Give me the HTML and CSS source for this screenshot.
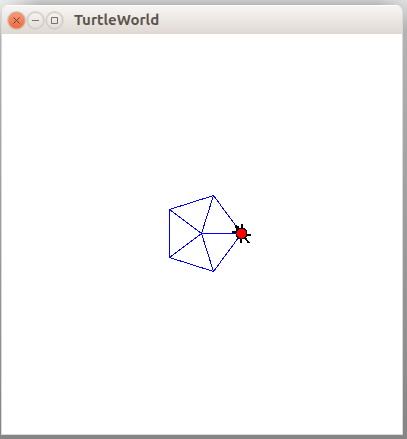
FILE: index.html
```html
<!DOCTYPE html>
<html lang="en">
<head>
<meta charset="utf-8">
<title>TurtleWorld</title>
<link rel="stylesheet" href="styles.css">
</head>
<body>
<main class="window">
  <header class="titlebar">
    <div class="controls">
      <button class="control control-close" type="button" aria-label="Close">
        <svg viewBox="0 0 15 15"><path d="M4.500 4.500l6 6M10.500 4.500l-6 6"/></svg>
      </button>
      <button class="control" type="button" aria-label="Minimize">
        <svg viewBox="0 0 15 15"><path d="M4 7.5h7"/></svg>
      </button>
      <button class="control" type="button" aria-label="Maximize">
        <svg viewBox="0 0 15 15"><path d="M4.500 4.500h6v6h-6z"/></svg>
      </button>
    </div>
    <h1 class="title">TurtleWorld</h1>
  </header>
  <section class="world">
    <svg class="drawing" viewBox="0 0 400 400" shape-rendering="crispEdges">
      <g class="trail">
        <path d="M239.500 199.500L211.500 161.500L167.500 175.500V223.500L211.500 237.500Z"/>
        <path d="M199.500 199.500H239.500M199.500 199.500L211.500 161.500M199.500 199.500L167.500 175.500M199.500 199.500L167.500 223.500M199.500 199.500L211.500 237.500"/>
      </g>
      <g class="turtle">
        <path class="legs" d="M239 199L240 190M239 200L249 201M239 199L247 209M239 199L239 209M239 199L230 198"/>
        <path class="head" d="M233 191h2v1h2v2h1v3h-4v-3h-1z"/>
        <circle class="shell" cx="239.500" cy="199.500" r="5.500"/>
      </g>
    </svg>
  </section>
</main>
</body>
</html>
```
FILE: styles.css
```css
* {
  box-sizing: border-box;
}

body {
  margin: 0;
  min-height: 100vh;
  display: flex;
  padding: 5px 4px 4px 1px;
  background:
    radial-gradient(circle at top left, #ececec, transparent 40px),
    radial-gradient(circle at top right, #dedede, transparent 30px),
    linear-gradient(#cccccc, #b6b6b6 5px, #a2a2a2 40%, #858585);
}

.window {
  flex: 1;
  display: flex;
  flex-direction: column;
  border: 1px solid #d9d9d9;
  border-top: 0;
  border-radius: 7px 7px 0 0;
  background: #fff;
  overflow: hidden;
}

.titlebar {
  display: flex;
  align-items: center;
  gap: 11px;
  height: 29px;
  padding: 0 6px;
  border-top: 1px solid #fff;
  background: linear-gradient(#f7f5f3, #dfd8d2);
}

.controls {
  display: flex;
  gap: 2px;
}

.control {
  width: 17px;
  height: 17px;
  padding: 0;
  border: 1px solid #cac4bd;
  border-radius: 50%;
  background: linear-gradient(#f5f3f1, #e2ddd8);
  box-shadow: 0 0 0 1px #ddd7d1;
}

.control-close {
  border-color: #e58a68;
  background: linear-gradient(#f39a77, #ee6c40);
  box-shadow: 0 0 0 1px #d3c5bb;
}

.control svg {
  display: block;
  fill: none;
  stroke: #7b7269;
  stroke-width: 1;
}

.control-close svg {
  stroke: #69402e;
}

.title {
  margin: 0;
  color: #5c544c;
  font: bold 15px/20px Ubuntu, "Noto Sans", sans-serif;
}

.world {
  flex: 1;
  display: flex;
}

.drawing {
  flex: 1;
  min-width: 0;
}

.trail {
  fill: none;
  stroke: #00f;
  stroke-width: 1;
}

.legs {
  stroke: #000;
  stroke-width: 2;
}

.shell {
  fill: #f00;
  stroke: #000;
  stroke-width: 1;
}
```
